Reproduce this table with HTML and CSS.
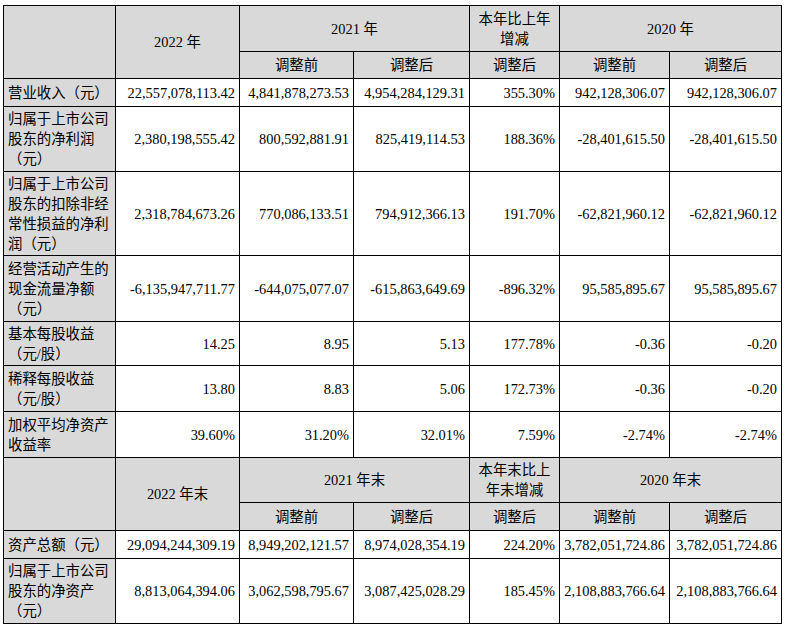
FILE: index.html
```html
<!DOCTYPE html>
<html lang="zh-CN">
<head>
<meta charset="utf-8">
<title>主要会计数据</title>
<link rel="stylesheet" href="styles.css">
</head>
<body>
<table class="fin">
  <colgroup>
    <col class="c-label">
    <col class="c-cur">
    <col class="c-prev-a">
    <col class="c-prev-b">
    <col class="c-chg">
    <col class="c-old-a">
    <col class="c-old-b">
  </colgroup>
  <tbody>
    <tr class="h46">
      <th class="hd" rowspan="2"></th>
      <th class="hd" rowspan="2">2022 年</th>
      <th class="hd" colspan="2">2021 年</th>
      <th class="hd">本年比上年<br>增减</th>
      <th class="hd" colspan="2">2020 年</th>
    </tr>
    <tr class="h27">
      <th class="hd">调整前</th>
      <th class="hd">调整后</th>
      <th class="hd">调整后</th>
      <th class="hd">调整前</th>
      <th class="hd">调整后</th>
    </tr>
    <tr class="h28">
      <th class="lbl">营业收入（元）</th>
      <td>22,557,078,113.42</td>
      <td>4,841,878,273.53</td>
      <td>4,954,284,129.31</td>
      <td>355.30%</td>
      <td>942,128,306.07</td>
      <td>942,128,306.07</td>
    </tr>
    <tr class="h65">
      <th class="lbl">归属于上市公司<br>股东的净利润<br>（元）</th>
      <td>2,380,198,555.42</td>
      <td>800,592,881.91</td>
      <td>825,419,114.53</td>
      <td>188.36%</td>
      <td>-28,401,615.50</td>
      <td>-28,401,615.50</td>
    </tr>
    <tr class="h84">
      <th class="lbl">归属于上市公司<br>股东的扣除非经<br>常性损益的净利<br>润（元）</th>
      <td>2,318,784,673.26</td>
      <td>770,086,133.51</td>
      <td>794,912,366.13</td>
      <td>191.70%</td>
      <td>-62,821,960.12</td>
      <td>-62,821,960.12</td>
    </tr>
    <tr class="h66">
      <th class="lbl">经营活动产生的<br>现金流量净额<br>（元）</th>
      <td>-6,135,947,711.77</td>
      <td>-644,075,077.07</td>
      <td>-615,863,649.69</td>
      <td>-896.32%</td>
      <td>95,585,895.67</td>
      <td>95,585,895.67</td>
    </tr>
    <tr class="h44">
      <th class="lbl">基本每股收益<br>（元/股）</th>
      <td>14.25</td>
      <td>8.95</td>
      <td>5.13</td>
      <td>177.78%</td>
      <td>-0.36</td>
      <td>-0.20</td>
    </tr>
    <tr class="h46">
      <th class="lbl">稀释每股收益<br>（元/股）</th>
      <td>13.80</td>
      <td>8.83</td>
      <td>5.06</td>
      <td>172.73%</td>
      <td>-0.36</td>
      <td>-0.20</td>
    </tr>
    <tr class="h46">
      <th class="lbl">加权平均净资产<br>收益率</th>
      <td>39.60%</td>
      <td>31.20%</td>
      <td>32.01%</td>
      <td>7.59%</td>
      <td>-2.74%</td>
      <td>-2.74%</td>
    </tr>
    <tr class="h45">
      <th class="hd" rowspan="2"></th>
      <th class="hd" rowspan="2">2022 年末</th>
      <th class="hd" colspan="2">2021 年末</th>
      <th class="hd">本年末比上<br>年末增减</th>
      <th class="hd" colspan="2">2020 年末</th>
    </tr>
    <tr class="h28">
      <th class="hd">调整前</th>
      <th class="hd">调整后</th>
      <th class="hd">调整后</th>
      <th class="hd">调整前</th>
      <th class="hd">调整后</th>
    </tr>
    <tr class="h28">
      <th class="lbl">资产总额（元）</th>
      <td>29,094,244,309.19</td>
      <td>8,949,202,121.57</td>
      <td>8,974,028,354.19</td>
      <td>224.20%</td>
      <td>3,782,051,724.86</td>
      <td>3,782,051,724.86</td>
    </tr>
    <tr class="h65">
      <th class="lbl">归属于上市公司<br>股东的净资产<br>（元）</th>
      <td>8,813,064,394.06</td>
      <td>3,062,598,795.67</td>
      <td>3,087,425,028.29</td>
      <td>185.45%</td>
      <td>2,108,883,766.64</td>
      <td>2,108,883,766.64</td>
    </tr>
  </tbody>
</table>
</body>
</html>
```
FILE: styles.css
```css
html, body {
  margin: 0;
  padding: 0;
  background: #ffffff;
}

body {
  padding: 5px 0 0 3px;
  font-family: "Liberation Serif", "Noto Sans CJK SC", serif;
  font-size: 14.4px;
  color: #000000;
}

.fin {
  border-collapse: collapse;
  table-layout: fixed;
  width: 779px;
}

.c-label { width: 112px; }
.c-cur { width: 124px; }
.c-prev-a { width: 114px; }
.c-prev-b { width: 116px; }
.c-chg { width: 90px; }
.c-old-a { width: 110px; }
.c-old-b { width: 112px; }

.fin th,
.fin td {
  border: 1px solid #000000;
  padding: 0 4px;
  line-height: 20px;
  vertical-align: middle;
  font-weight: normal;
  white-space: nowrap;
  overflow: hidden;
}

.fin td {
  text-align: right;
  background: #ffffff;
}

.fin .hd {
  text-align: center;
  background: #d9d9d9;
}

.fin .lbl {
  text-align: left;
  background: #d9d9d9;
}

.h27 { height: 27px; }
.h28 { height: 28px; }
.h44 { height: 44px; }
.h45 { height: 45px; }
.h46 { height: 46px; }
.h65 { height: 65px; }
.h66 { height: 66px; }
.h84 { height: 84px; }
```
